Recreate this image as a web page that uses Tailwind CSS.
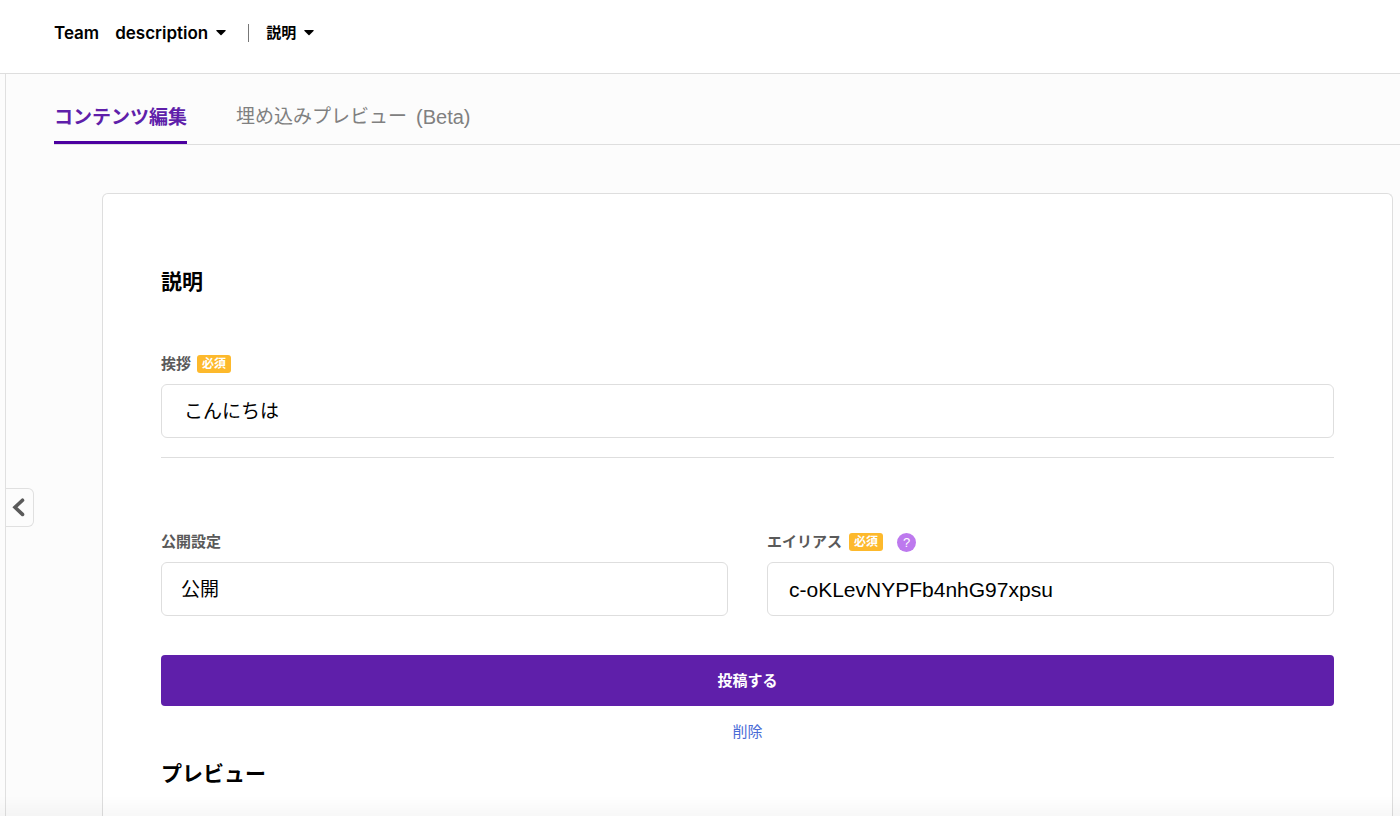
<!DOCTYPE html>
<html lang="ja">
<head>
<meta charset="utf-8">
<meta name="viewport" content="width=device-width, initial-scale=1">
<title>説明</title>
<script src="https://cdn.jsdelivr.net/npm/@tailwindcss/browser@4"></script>
</head>
<body class="flex min-h-screen flex-col bg-[#fcfcfc] font-['Liberation_Sans','Noto_Sans_CJK_JP',sans-serif] text-black">
  <header class="flex h-[74px] items-start border-b border-[#dedede] bg-white pl-[54px] pt-[21px] font-['Inter','Noto_Sans_CJK_JP',sans-serif] text-[17px] leading-6 font-semibold">
    <a href="#" class="mr-4">Team</a>
    <button type="button" class="flex items-center gap-2">description
      <svg class="h-[6px] w-[10px]" viewBox="0 0 10 6" aria-hidden="true"><path d="M1 0h8c.7 0 .9.600.5 1L5.500 5a.7.7 0 0 1-1 0L.5 1C.1.600.300 0 1 0z"/></svg>
    </button>
    <span class="mt-[3px] ml-[22px] mr-[17px] h-[18px] w-px bg-[#777]"></span>
    <button type="button" class="flex items-center gap-2 text-[15px] font-bold">説明
      <svg class="h-[6px] w-[10px]" viewBox="0 0 10 6" aria-hidden="true"><path d="M1 0h8c.7 0 .9.600.5 1L5.500 5a.7.7 0 0 1-1 0L.5 1C.1.600.300 0 1 0z"/></svg>
    </button>
  </header>

  <main class="relative ml-[5px] flex flex-1 flex-col border-l border-[#e0e0e0]">
    <nav class="ml-12 flex h-[71px] gap-[49px] border-b border-[#dedede] text-[19px] leading-7">
      <a href="#" class="-mb-px flex h-[70px] items-start border-b-3 border-[#4c00a0] pt-[30px] font-bold text-[#5f1faa]">コンテンツ編集</a>
      <a href="#" class="flex items-start gap-[9px] pt-[29px] text-[#808080]"><span>埋め込みプレビュー</span> <span class="text-[20px]">(Beta)</span></a>
    </nav>

    <button type="button" aria-label="サイドバーを開閉" class="absolute top-[414px] left-0 flex h-[39px] w-7 items-center rounded-r-md border border-l-0 border-[#e0e0e0] bg-[#fcfcfc] pl-[6px]">
      <svg class="h-[19px] w-[13px]" viewBox="0 0 13 19" fill="none" stroke="#5a5a5a" stroke-width="3.600" stroke-linecap="round" aria-hidden="true"><path d="M10.500 2.200 3 9.300l7.500 7.100"/></svg>
    </button>

    <form class="mt-12 mr-[7px] ml-24 flex flex-1 flex-col rounded-t-md border border-b-0 border-[#dedede] bg-white px-[58px] pt-[72px]">
      <h1 class="text-[21px] leading-8 font-bold">説明</h1>

      <div class="mt-14 flex h-5 items-center gap-[6px]">
        <label for="greeting" class="text-[15px] leading-5 font-bold text-[#5a5a5a]">挨拶</label>
        <span class="h-[18px] rounded-[3px] bg-[#fdb92c] px-[5px] text-[12px] leading-[18px] font-bold text-white">必須</span>
      </div>
      <input id="greeting" type="text" value="こんにちは" class="mt-[10px] h-[54px] w-full rounded-md border border-[#dedede] bg-white px-[22px] pb-1 text-[19px]">
      <hr class="mt-[19px] border-[#dedede]">

      <div class="mt-[74px] grid grid-cols-2 gap-[39px]">
        <div>
          <div class="flex h-5 items-center">
            <label for="visibility" class="text-[15px] leading-5 font-bold text-[#5a5a5a]">公開設定</label>
          </div>
          <select id="visibility" class="mt-[10px] block h-[54px] w-full appearance-none rounded-md border border-[#dedede] bg-white px-[19px] pt-[2px] text-[19px]">
            <option>公開</option>
            <option>非公開</option>
          </select>
        </div>
        <div>
          <div class="flex h-5 items-center gap-[7px]">
            <label for="alias" class="text-[15px] leading-5 font-bold text-[#5a5a5a]">エイリアス</label>
            <span class="h-[18px] rounded-[3px] bg-[#fdb92c] px-[5px] text-[12px] leading-[18px] font-bold text-white">必須</span>
            <button type="button" class="ml-[7px] size-[19px] rounded-full bg-[#bd79ee] text-[13px] leading-[19px] text-white">?</button>
          </div>
          <input id="alias" type="text" value="c-oKLevNYPFb4nhG97xpsu" class="mt-[10px] block h-[54px] w-full rounded-md border border-[#dedede] bg-white px-[21px] pt-[2px] text-[21px]">
        </div>
      </div>

      <button type="submit" class="mt-[39px] h-[51px] rounded bg-[#5f1faa] pt-[2px] text-[15px] font-bold text-white">投稿する</button>
      <a href="#" class="mt-[14px] self-center text-[15px] leading-6 text-[#4a6bd6]">削除</a>
      <h2 class="mt-[14px] text-[21px] leading-8 font-bold">プレビュー</h2>
    </form>
  </main>
  <div class="pointer-events-none fixed inset-x-0 bottom-0 h-5 bg-linear-to-b from-black/0 to-black/3"></div>
</body>
</html>
